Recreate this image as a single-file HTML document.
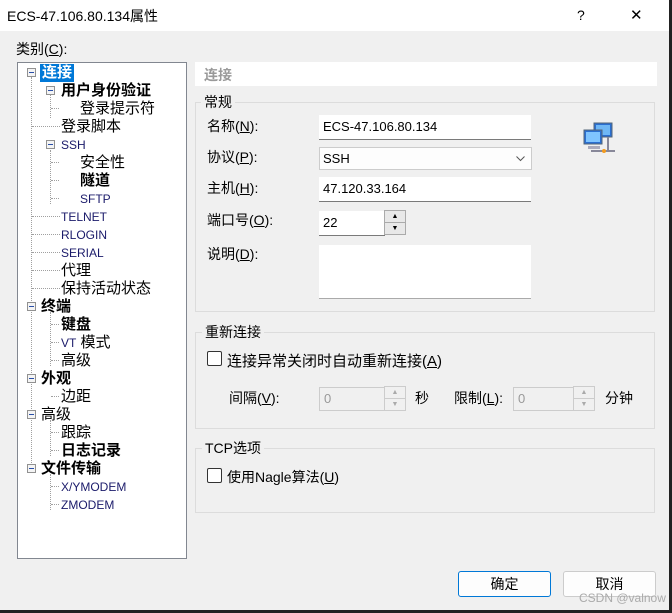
<!DOCTYPE html>
<html><head><meta charset="utf-8"><style>
*{margin:0;padding:0;box-sizing:border-box}
body{width:672px;height:613px;background:#f0f0f0;font-family:"Liberation Sans","Noto Sans CJK SC",sans-serif;font-size:14px;color:#000;position:relative;overflow:hidden}
.a{position:absolute;white-space:nowrap}
.title{left:0;top:0;width:669px;height:31px;background:#fff}
.tree{left:17px;top:62px;width:170px;height:497px;background:#fff;border:1px solid #828790}
.t{position:absolute;height:18px;line-height:18px;font-size:15px}
.b{font-weight:bold}
.pm{position:absolute;width:9px;height:9px;border:1px solid #919191;background:#f4f4f4}
.pm:after{content:"";position:absolute;left:1px;top:3px;width:5px;height:1px;background:#2a4fa8}
.vl{position:absolute;border-left:1px dotted #a0a0a0}
.hl{position:absolute;border-top:1px dotted #a0a0a0;width:8px}
.grp{position:absolute;border:1px solid #dcdcdc}
.gl{position:absolute;background:#f0f0f0;padding:0 3px;font-size:14px;line-height:16px}
.inp{position:absolute;background:#fff;border-bottom:1px solid #7a7a7a;height:25px;line-height:24px;padding-left:4px;font-size:13px}
.lbl{position:absolute;font-size:14px}
.cb{position:absolute;width:15px;height:15px;border:1px solid #333;background:#fff;border-radius:2px}
.dis{position:absolute;background:#f0f0f0;border:1px solid #ccc;color:#999;padding-left:4px;line-height:22px;height:24px;font-size:13px}
.sp{position:absolute;width:22px;height:25px;border:1px solid #aaa;background:#e8e8e8}
.sp div{text-align:center;font-size:7px;line-height:11px}
.sp.d{border-color:#ccc;background:#f0f0f0;color:#aaa}
.btn{position:absolute;height:26px;border:1px solid #ccc;border-radius:3px;background:#fdfdfd;text-align:center;line-height:24px;font-size:14px}
u{text-decoration:underline}
</style></head><body>
<div class="a title"></div>
<div class="a" style="left:7px;top:6px;font-size:14px">ECS-47.106.80.134属性</div>
<div class="a" style="left:577px;top:7px;font-size:14px">?</div>
<div class="a" style="left:630px;top:6px;font-size:15px">✕</div>
<div class="a" style="left:669px;top:0;width:3px;height:613px;background:#222"></div>
<div class="a" style="left:0;top:610px;width:672px;height:3px;background:#222"></div>
<div class="a" style="left:16px;top:39px">类别(<u>C</u>):</div>

<div class="a tree">
<div class="vl" style="left:13px;top:14px;height:392px"></div>
<div class="vl" style="left:32px;top:32px;height:23px"></div>
<div class="vl" style="left:32px;top:87px;height:54px"></div>
<div class="vl" style="left:32px;top:249px;height:54px"></div>
<div class="vl" style="left:32px;top:357px;height:36px"></div>
<div class="vl" style="left:32px;top:411px;height:36px"></div>
<div class="hl" style="left:33px;top:45px"></div>
<div class="hl" style="left:14px;top:63px;width:28px"></div>
<div class="hl" style="left:33px;top:99px"></div><div class="hl" style="left:33px;top:117px"></div><div class="hl" style="left:33px;top:135px"></div>
<div class="hl" style="left:14px;top:153px;width:28px"></div><div class="hl" style="left:14px;top:171px;width:28px"></div><div class="hl" style="left:14px;top:189px;width:28px"></div><div class="hl" style="left:14px;top:207px;width:28px"></div><div class="hl" style="left:14px;top:225px;width:28px"></div>
<div class="hl" style="left:33px;top:261px"></div><div class="hl" style="left:33px;top:279px"></div><div class="hl" style="left:33px;top:297px"></div>
<div class="hl" style="left:33px;top:333px"></div>
<div class="hl" style="left:33px;top:369px"></div><div class="hl" style="left:33px;top:387px"></div>
<div class="hl" style="left:33px;top:423px"></div><div class="hl" style="left:33px;top:441px"></div>
<div class="pm" style="left:9px;top:5px"></div>
<div class="pm" style="left:28px;top:23px"></div>
<div class="pm" style="left:28px;top:77px"></div>
<div class="pm" style="left:9px;top:239px"></div>
<div class="pm" style="left:9px;top:311px"></div>
<div class="pm" style="left:9px;top:347px"></div>
<div class="pm" style="left:9px;top:401px"></div>
<div class="t b" style="left:22px;top:1px;background:#0078d7;color:#fff;padding:0 2px">连接</div>
<div class="t b" style="left:43px;top:19px">用户身份验证</div>
<div class="t" style="left:62px;top:37px">登录提示符</div>
<div class="t" style="left:43px;top:55px">登录脚本</div>
<div class="t" style="left:43px;top:73px;font-size:12px;color:#1a1a6a">SSH</div>
<div class="t" style="left:62px;top:91px">安全性</div>
<div class="t b" style="left:62px;top:109px">隧道</div>
<div class="t" style="left:62px;top:127px;font-size:12px;color:#1a1a6a">SFTP</div>
<div class="t" style="left:43px;top:145px;font-size:12px;color:#1a1a6a">TELNET</div>
<div class="t" style="left:43px;top:163px;font-size:12px;color:#1a1a6a">RLOGIN</div>
<div class="t" style="left:43px;top:181px;font-size:12px;color:#1a1a6a">SERIAL</div>
<div class="t" style="left:43px;top:199px">代理</div>
<div class="t" style="left:43px;top:217px">保持活动状态</div>
<div class="t b" style="left:23px;top:235px">终端</div>
<div class="t b" style="left:43px;top:253px">键盘</div>
<div class="t" style="left:43px;top:271px"><span style="font-size:12px;color:#1a1a6a">VT</span> 模式</div>
<div class="t" style="left:43px;top:289px">高级</div>
<div class="t b" style="left:23px;top:307px">外观</div>
<div class="t" style="left:43px;top:325px">边距</div>
<div class="t" style="left:23px;top:343px">高级</div>
<div class="t" style="left:43px;top:361px">跟踪</div>
<div class="t b" style="left:43px;top:379px">日志记录</div>
<div class="t b" style="left:23px;top:397px">文件传输</div>
<div class="t" style="left:43px;top:415px;font-size:12px;color:#1a1a6a">X/YMODEM</div>
<div class="t" style="left:43px;top:433px;font-size:12px;color:#1a1a6a">ZMODEM</div>
</div>

<div class="a" style="left:195px;top:62px;width:462px;height:24px;background:#fff"></div>
<div class="a b" style="left:204px;top:65px;color:#999;font-size:14px">连接</div>

<div class="grp" style="left:195px;top:102px;width:460px;height:210px"></div>
<div class="gl" style="left:201px;top:94px">常规</div>
<div class="lbl" style="left:207px;top:116px">名称(<u>N</u>):</div>
<div class="inp" style="left:319px;top:115px;width:212px">ECS-47.106.80.134</div>
<div class="lbl" style="left:207px;top:147px">协议(<u>P</u>):</div>
<div class="a" style="left:319px;top:147px;width:213px;height:23px;background:#fdfdfd;border:1px solid #ccc;line-height:21px;padding-left:3px;font-size:13px">SSH<svg style="position:absolute;right:6px;top:8px" width="9" height="6"><path d="M0.5 0.5L4.5 4.5L8.5 0.5" stroke="#555" fill="none"/></svg></div>
<div class="lbl" style="left:207px;top:178px">主机(<u>H</u>):</div>
<div class="inp" style="left:319px;top:177px;width:212px">47.120.33.164</div>
<div class="lbl" style="left:207px;top:210px">端口号(<u>O</u>):</div>
<div class="inp" style="left:319px;top:211px;width:66px">22</div>
<div class="sp" style="left:384px;top:210px"><div style="border-bottom:1px solid #aaa">▲</div><div>▼</div></div>
<div class="lbl" style="left:207px;top:244px">说明(<u>D</u>):</div>
<div class="a" style="left:319px;top:245px;width:212px;height:54px;background:#fff;border-bottom:1px solid #aaa"></div>
<svg class="a" style="left:582px;top:120px" width="36" height="36" viewBox="0 0 36 36">
<rect x="12" y="3" width="18" height="14" fill="#2a6fd1" stroke="#567" />
<rect x="14" y="5" width="14" height="10" fill="#6fb7f5"/>
<rect x="2" y="10" width="18" height="14" fill="#2a6fd1" stroke="#567"/>
<rect x="4" y="12" width="14" height="10" fill="#7fc4ff"/>
<rect x="6" y="26" width="12" height="3" fill="#aab"/>
<path d="M9 31H33M26 17V31" stroke="#889" stroke-width="2"/>
<circle cx="22" cy="31" r="2" fill="#f39c1f"/>
</svg>

<div class="grp" style="left:195px;top:332px;width:460px;height:97px"></div>
<div class="gl" style="left:202px;top:324px">重新连接</div>
<div class="cb" style="left:207px;top:351px"></div>
<div class="lbl" style="left:227px;top:350px;font-size:15px">连接异常关闭时自动重新连接(<u>A</u>)</div>
<div class="lbl" style="left:229px;top:388px">间隔(<u>V</u>):</div>
<div class="dis" style="left:319px;top:387px;width:67px">0</div>
<div class="sp d" style="left:384px;top:386px"><div style="border-bottom:1px solid #ccc">▲</div><div>▼</div></div>
<div class="lbl" style="left:415px;top:388px">秒</div>
<div class="lbl" style="left:454px;top:388px">限制(<u>L</u>):</div>
<div class="dis" style="left:513px;top:387px;width:62px">0</div>
<div class="sp d" style="left:573px;top:386px"><div style="border-bottom:1px solid #ccc">▲</div><div>▼</div></div>
<div class="lbl" style="left:605px;top:388px">分钟</div>

<div class="grp" style="left:195px;top:448px;width:460px;height:65px"></div>
<div class="gl" style="left:202px;top:440px">TCP选项</div>
<div class="cb" style="left:207px;top:468px"></div>
<div class="lbl" style="left:227px;top:467px">使用Nagle算法(<u>U</u>)</div>

<div class="btn" style="left:458px;top:571px;width:93px;border:1px solid #0078d7">确定</div>
<div class="btn" style="left:563px;top:571px;width:93px">取消</div>
<div class="a" style="left:579px;top:591px;color:#aaa;font-size:12px">CSDN @valnow</div>
</body></html>
